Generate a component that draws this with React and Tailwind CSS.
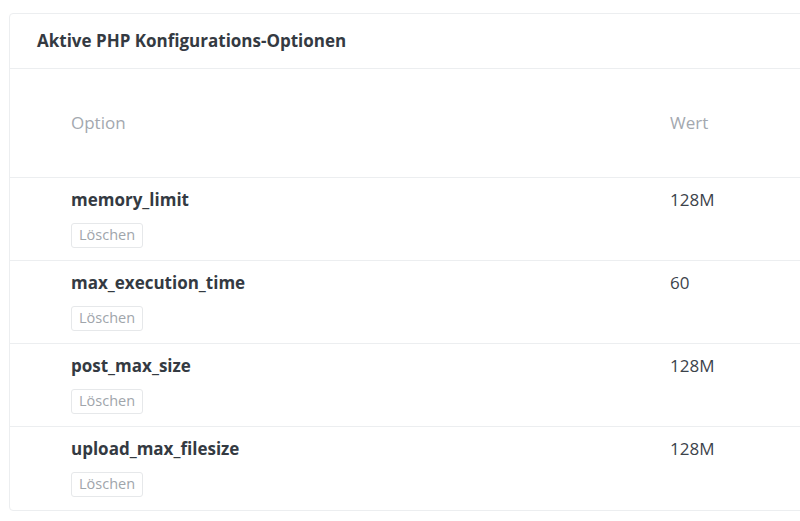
const rows = [
  { name: 'memory_limit', value: '128M' },
  { name: 'max_execution_time', value: '60' },
  { name: 'post_max_size', value: '128M' },
  { name: 'upload_max_filesize', value: '128M' },
];

export default function App() {
  return (
    <div
      className="w-[800px] h-[521px] overflow-hidden bg-white pt-[13px] pl-[9px]"
      style={{ fontFamily: '"Open Sans", "Liberation Sans", sans-serif' }}
    >
      <div className="w-[830px] border border-[#eceef0] rounded-[4px] bg-white">
        <div className="h-[55px] flex items-center pl-[27px] border-b border-[#eceef0]">
          <h2 className="text-[17px] font-bold text-[#343a42]">Aktive PHP Konfigurations-Optionen</h2>
        </div>
        <div className="h-[109px] flex items-center border-b border-[#eceef0] text-[17px] text-[#a3a8af]">
          <div className="pl-[61px] w-[660px]">Option</div>
          <div>Wert</div>
        </div>
        {rows.map((r, i) => (
          <div
            key={r.name}
            className={`h-[83px] flex pt-[9px] ${i < rows.length - 1 ? 'border-b border-[#eceef0]' : ''}`}
          >
            <div className="pl-[61px] w-[660px]">
              <div className="text-[17px] font-bold text-[#343a42] leading-[26px]">{r.name}</div>
              <button className="mt-[10px] h-[25px] px-[7px] border border-[#e6e8ea] rounded-[3px] text-[14.5px] text-[#a0a5ab] leading-none">
                Löschen
              </button>
            </div>
            <div className="text-[17px] text-[#3c434b] leading-[26px]">{r.value}</div>
          </div>
        ))}
      </div>
    </div>
  );
}
